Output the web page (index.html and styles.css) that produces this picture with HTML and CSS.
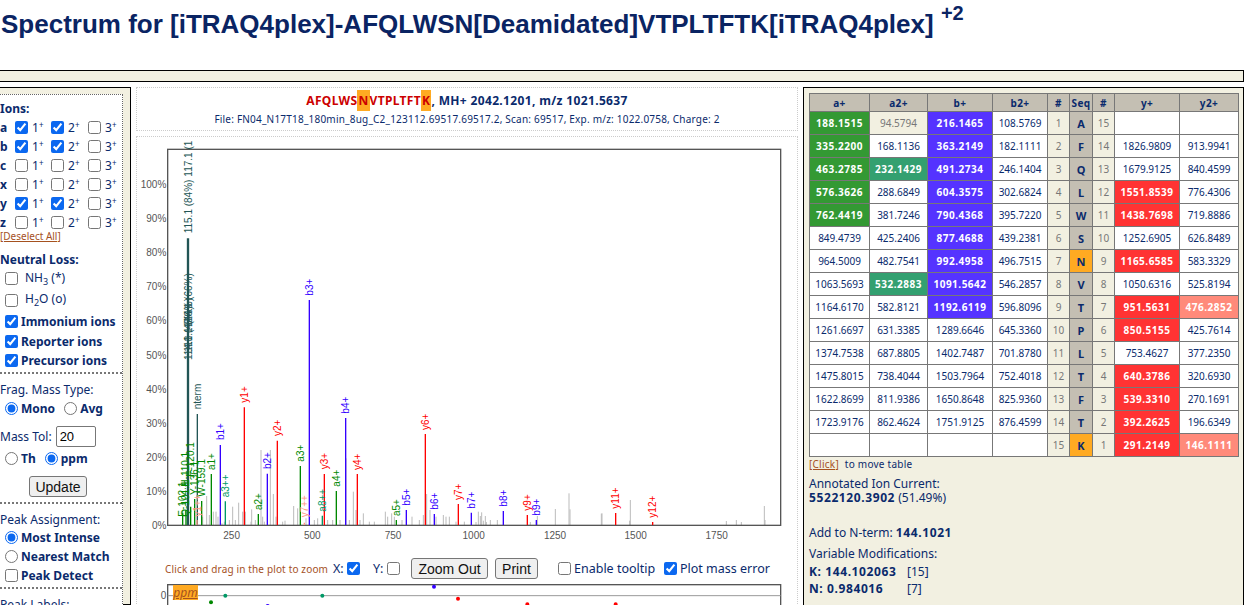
FILE: index.html
```html
<!DOCTYPE html>
<html lang="en">
<head>
<meta charset="utf-8">
<title>Spectrum</title>
<link rel="stylesheet" href="styles.css">
</head>
<body>
<h1 class="title">Spectrum for [iTRAQ4plex]-AFQLWSN[Deamidated]VTPLTFTK[iTRAQ4plex] <sup>+2</sup></h1>
<div class="bar"></div>
<div class="main">
  <aside class="left">
    <div class="inner">
      <section class="sec sec-ions">
        <div class="row h19"><b>Ions:</b></div>
        <div class="ion"><b>a</b><input type="checkbox" checked><span>1<sup>+</sup></span><input type="checkbox" checked><span>2<sup>+</sup></span><input type="checkbox"><span>3<sup>+</sup></span></div>
        <div class="ion"><b>b</b><input type="checkbox" checked><span>1<sup>+</sup></span><input type="checkbox" checked><span>2<sup>+</sup></span><input type="checkbox"><span>3<sup>+</sup></span></div>
        <div class="ion"><b>c</b><input type="checkbox"><span>1<sup>+</sup></span><input type="checkbox"><span>2<sup>+</sup></span><input type="checkbox"><span>3<sup>+</sup></span></div>
        <div class="ion"><b>x</b><input type="checkbox"><span>1<sup>+</sup></span><input type="checkbox"><span>2<sup>+</sup></span><input type="checkbox"><span>3<sup>+</sup></span></div>
        <div class="ion"><b>y</b><input type="checkbox" checked><span>1<sup>+</sup></span><input type="checkbox" checked><span>2<sup>+</sup></span><input type="checkbox"><span>3<sup>+</sup></span></div>
        <div class="ion"><b>z</b><input type="checkbox"><span>1<sup>+</sup></span><input type="checkbox"><span>2<sup>+</sup></span><input type="checkbox"><span>3<sup>+</sup></span></div>
        <div class="deselect"><a href="#">[Deselect All]</a></div>
        <div class="row h18 neutral"><b>Neutral Loss:</b></div>
        <div class="row h21 ind"><input type="checkbox"><span class="gap6">NH<sub>3</sub> (*)</span></div>
        <div class="row h22 ind"><input type="checkbox"><span class="gap6">H<sub>2</sub>O (o)</span></div>
        <div class="row h21 ind"><input type="checkbox" checked><b>Immonium ions</b></div>
        <div class="row h19 ind"><input type="checkbox" checked><b>Reporter ions</b></div>
        <div class="row h19 ind"><input type="checkbox" checked><b>Precursor ions</b></div>
      </section>
      <section class="sec sec-frag">
        <div class="row h18">Frag. Mass Type:</div>
        <div class="row h20 ind"><input type="radio" name="mt" checked><b class="pr">Mono</b><input type="radio" name="mt"><b>Avg</b></div>
        <div class="row h20 tol">Mass Tol: <input type="text" value="20"></div>
        <div class="row h20 ind"><input type="radio" name="tu"><b class="pr">Th</b><input type="radio" name="tu" checked><b>ppm</b></div>
        <button class="btn update" type="button">Update</button>
      </section>
      <section class="sec sec-peak">
        <div class="row h18">Peak Assignment:</div>
        <div class="row h19 ind"><input type="radio" name="pa" checked><b>Most Intense</b></div>
        <div class="row h19 ind"><input type="radio" name="pa"><b>Nearest Match</b></div>
        <div class="row h19 ind"><input type="checkbox"><b>Peak Detect</b></div>
      </section>
      <section class="sec sec-labels">
        <div class="row h18">Peak Labels:</div>
      </section>
    </div>
  </aside>

  <main class="center">
    <header class="head">
      <div class="seqline"><span class="seq">AFQLWS<span class="mod">N</span>VTPLTFT<span class="mod">K</span></span>, MH+ 2042.1201, m/z 1021.5637</div>
      <div class="fileline">File: FN04_N17T18_180min_8ug_C2_123112.69517.69517.2, Scan: 69517, Exp. m/z: 1022.0758, Charge: 2</div>
    </header>
    <div class="plotbox">
      <svg class="plot" viewBox="3 -549 1980 1257" width="660" height="419" aria-label="Spectrum plot">
        <path class="noise" d="M200 615V590M212 615V528M220 615V585M232 615V575M240 615V575M246 615V590M258 615V610M265 615V605M280 615V600M290 615V560M298 615V600M308 615V548M320 615V575M328 615V575M345 615V605M347 615V568M358 615V600M375 615V390M380 615V590M385 615V605M403 615V390M412 615V522M420 615V590M440 615V605M447 615V602M473 615V558M485 615V565M510 615V595M535 615V600M545 615V595M575 615V600M590 615V600M612 615V600M630 615V415M640 615V600M652 615V515M660 615V570M672 615V600M682 615V580M700 615V605M715 615V605M748 615V575M755 615V590M767 615V580M775 615V590M798 615V600M828 615V590M850 615V600M862 615V585M872 615V522M882 615V570M900 615V590M922 615V585M930 615V590M940 615V590M960 615V605M985 615V605M1020 615V606M1027 615V575M1033 615V588M1037 615V577M1042 615V602M1048 615V588M1051 615V606M1063 615V600M1084 615V600M1183 615V606M1204 615V588M1258 615V567M1299 615V520M1302 615V568M1396 615V581M1398 615V580M1481 615V602M1483 615V540M1771 615V603M1801 615V600M1816 615V606M1885 615V558M1887 615V600"/>
        <rect class="frame" x="95" y="-512" width="1839" height="1128"/>

        <g class="ylab">
          <text x="91" y="-395">100%</text><text x="91" y="-293">90%</text><text x="91" y="-191">80%</text><text x="91" y="-89">70%</text><text x="91" y="13">60%</text><text x="91" y="118">50%</text><text x="91" y="218">40%</text><text x="91" y="320">30%</text><text x="91" y="422">20%</text><text x="91" y="524">10%</text><text x="91" y="627">0%</text>
        </g>
        <g class="xlab">
          <text x="287" y="657">250</text><text x="529" y="657">500</text><text x="771" y="657">750</text><text x="1013" y="657">1000</text><text x="1257" y="657">1250</text><text x="1499" y="657">1500</text><text x="1742" y="657">1750</text>
        </g>

        <path class="pk c-term thick" d="M156 615V-245"/>
        <path class="pk c-term" d="M184 615V282"/>
        <path class="pk c-a" d="M140 615V580M150 615V570M164 615V560M176 615V537M197 615V543M226 615V462M367 615V582M493 615V438M601 615V513M781 615V600"/>
        <path class="pk c-a2" d="M268 615V544M559 615V587"/>
        <path class="pk c-b" d="M253 615V375M394 615V461M520 615V-60M629 615V294M811 615V570M895 615V582M1006 615V578M1102 615V573M1201 615V600"/>
        <path class="pk c-y" d="M325 615V262M424 615V362M565 615V462M664 615V462M868 615V342M967 615V552M1174 615V585M1439 615V579M1550 615V606"/>
        <path class="pk c-y2" d="M505 615V608M183 615V600"/>

        <g class="lab c-term-t">
          <text transform="translate(167 -260) rotate(-90)">115.1 (84%)</text>
          <text transform="translate(167 -430) rotate(-90)">117.1 (1</text>
          <text transform="translate(167 21) rotate(-90)">116.1 (66%)</text>
          <text transform="translate(167 120) rotate(-90)">114.1 (47%)</text>
          <text transform="translate(167 95) rotate(-90)">118.1 (44%)</text>
          <text transform="translate(196 268) rotate(-90)">nterm</text>
        </g>
        <g class="lab c-a-t">
          <text transform="translate(150 590) rotate(-90)">E-102.1</text>
          <text transform="translate(160 590) rotate(-90)">Q-101.1</text>
          <text transform="translate(160 500) rotate(-90)">H-110.1</text>
          <text transform="translate(175 470) rotate(-90)">F-120.1</text>
          <text transform="translate(185 525) rotate(-90)">Y-136.1</text>
          <text transform="translate(208 530) rotate(-90)">W-159.1</text>
          <text transform="translate(238 450) rotate(-90)">a1+</text>
          <text transform="translate(378 570) rotate(-90)">a2+</text>
          <text transform="translate(504 425) rotate(-90)">a3+</text>
          <text transform="translate(612 500) rotate(-90)">a4+</text>
          <text transform="translate(792 588) rotate(-90)">a5+</text>
        </g>
        <g class="lab c-a2-t">
          <text transform="translate(279 532) rotate(-90)">a3++</text>
          <text transform="translate(570 575) rotate(-90)">a8++</text>
        </g>
        <g class="lab c-b-t">
          <text transform="translate(264 360) rotate(-90)">b1+</text>
          <text transform="translate(405 447) rotate(-90)">b2+</text>
          <text transform="translate(531 -73) rotate(-90)">b3+</text>
          <text transform="translate(640 281) rotate(-90)">b4+</text>
          <text transform="translate(822 557) rotate(-90)">b5+</text>
          <text transform="translate(906 569) rotate(-90)">b6+</text>
          <text transform="translate(1017 566) rotate(-90)">b7+</text>
          <text transform="translate(1113 560) rotate(-90)">b8+</text>
          <text transform="translate(1212 587) rotate(-90)">b9+</text>
        </g>
        <g class="lab c-y-t">
          <text transform="translate(336 248) rotate(-90)">y1+</text>
          <text transform="translate(435 348) rotate(-90)">y2+</text>
          <text transform="translate(576 448) rotate(-90)">y3+</text>
          <text transform="translate(675 450) rotate(-90)">y4+</text>
          <text transform="translate(879 330) rotate(-90)">y6+</text>
          <text transform="translate(978 540) rotate(-90)">y7+</text>
          <text transform="translate(1185 572) rotate(-90)">y9+</text>
          <text transform="translate(1450 566) rotate(-90)">y11+</text>
          <text transform="translate(1561 593) rotate(-90)">y12+</text>
        </g>
        <g class="lab c-y2-t">
          <text transform="translate(516 592) rotate(-90)">y7++</text>
          <text transform="translate(194 590) rotate(-90)">y1++</text>
        </g>
      </svg>

      <div class="controls">
        <span class="hint">Click and drag in the plot to zoom</span>
        <label class="ctl axis-x">X: <input type="checkbox" checked></label>
        <label class="ctl axis-y">Y: <input type="checkbox"></label>
        <button class="btn zoom" type="button">Zoom Out</button>
        <button class="btn print" type="button">Print</button>
        <label class="ctl tip"><input type="checkbox">Enable tooltip</label>
        <label class="ctl err"><input type="checkbox" checked>Plot mass error</label>
      </div>

      <div class="errbox">
        <a class="ppm" href="#">ppm</a>
        <svg class="errplot" viewBox="3 783 1980 90" width="660" height="30" aria-label="Mass error plot">
          <rect class="frame" x="95" y="794" width="1839" height="200"/>
          <path class="zero" d="M95 827H1934"/>
          <text class="ylab" x="91" y="837">0</text>
          <circle class="d-a" cx="225" cy="847" r="6"/>
          <circle class="d-a2" cx="268" cy="827" r="6"/>
          <circle class="d-a2" cx="559" cy="827" r="6"/>
          <circle class="d-b" cx="894" cy="800" r="6"/>
          <circle class="d-b" cx="395" cy="858" r="6"/>
          <circle class="d-y" cx="966" cy="836" r="6"/>
          <circle class="d-y" cx="1174" cy="853" r="6"/>
          <circle class="d-y" cx="1439" cy="853" r="6"/>
        </svg>
      </div>
    </div>
  </main>

  <aside class="right">
    <table class="ions">
      <colgroup><col class="w60"><col class="w58"><col class="w65"><col class="w55"><col class="w22"><col class="w23"><col class="w22"><col class="w65"><col class="w59"></colgroup>
      <thead><tr><th>a+</th><th>a2+</th><th>b+</th><th>b2+</th><th>#</th><th>Seq</th><th>#</th><th>y+</th><th>y2+</th></tr></thead>
      <tbody>
        <tr><td class="a">188.1515</td><td class="un">94.5794</td><td class="b">216.1465</td><td>108.5769</td><td class="n">1</td><td class="s">A</td><td class="n">15</td><td></td><td></td></tr>
        <tr><td class="a">335.2200</td><td>168.1136</td><td class="b">363.2149</td><td>182.1111</td><td class="n">2</td><td class="s">F</td><td class="n">14</td><td>1826.9809</td><td>913.9941</td></tr>
        <tr><td class="a">463.2785</td><td class="a2">232.1429</td><td class="b">491.2734</td><td>246.1404</td><td class="n">3</td><td class="s">Q</td><td class="n">13</td><td>1679.9125</td><td>840.4599</td></tr>
        <tr><td class="a">576.3626</td><td>288.6849</td><td class="b">604.3575</td><td>302.6824</td><td class="n">4</td><td class="s">L</td><td class="n">12</td><td class="y">1551.8539</td><td>776.4306</td></tr>
        <tr><td class="a">762.4419</td><td>381.7246</td><td class="b">790.4368</td><td>395.7220</td><td class="n">5</td><td class="s">W</td><td class="n">11</td><td class="y">1438.7698</td><td>719.8886</td></tr>
        <tr><td>849.4739</td><td>425.2406</td><td class="b">877.4688</td><td>439.2381</td><td class="n">6</td><td class="s">S</td><td class="n">10</td><td>1252.6905</td><td>626.8489</td></tr>
        <tr><td>964.5009</td><td>482.7541</td><td class="b">992.4958</td><td>496.7515</td><td class="n">7</td><td class="s m">N</td><td class="n">9</td><td class="y">1165.6585</td><td>583.3329</td></tr>
        <tr><td>1063.5693</td><td class="a2">532.2883</td><td class="b">1091.5642</td><td>546.2857</td><td class="n">8</td><td class="s">V</td><td class="n">8</td><td>1050.6316</td><td>525.8194</td></tr>
        <tr><td>1164.6170</td><td>582.8121</td><td class="b">1192.6119</td><td>596.8096</td><td class="n">9</td><td class="s">T</td><td class="n">7</td><td class="y">951.5631</td><td class="y2">476.2852</td></tr>
        <tr><td>1261.6697</td><td>631.3385</td><td>1289.6646</td><td>645.3360</td><td class="n">10</td><td class="s">P</td><td class="n">6</td><td class="y">850.5155</td><td>425.7614</td></tr>
        <tr><td>1374.7538</td><td>687.8805</td><td>1402.7487</td><td>701.8780</td><td class="n">11</td><td class="s">L</td><td class="n">5</td><td>753.4627</td><td>377.2350</td></tr>
        <tr><td>1475.8015</td><td>738.4044</td><td>1503.7964</td><td>752.4018</td><td class="n">12</td><td class="s">T</td><td class="n">4</td><td class="y">640.3786</td><td>320.6930</td></tr>
        <tr><td>1622.8699</td><td>811.9386</td><td>1650.8648</td><td>825.9360</td><td class="n">13</td><td class="s">F</td><td class="n">3</td><td class="y">539.3310</td><td>270.1691</td></tr>
        <tr><td>1723.9176</td><td>862.4624</td><td>1751.9125</td><td>876.4599</td><td class="n">14</td><td class="s">T</td><td class="n">2</td><td class="y">392.2625</td><td>196.6349</td></tr>
        <tr><td></td><td></td><td></td><td></td><td class="n">15</td><td class="s m">K</td><td class="n">1</td><td class="y">291.2149</td><td class="y2">146.1111</td></tr>
      </tbody>
    </table>
    <div class="move"><a href="#">[Click]</a> to move table</div>
    <div class="info current">Annotated Ion Current:</div>
    <div class="info"><b>5522120.3902</b> (51.49%)</div>
    <div class="info nterm">Add to N-term: <b>144.1021</b></div>
    <div class="info varhead">Variable Modifications:</div>
    <div class="info var"><b class="vk">K: 144.102063</b><span>[15]</span></div>
    <div class="info var"><b class="vk">N: 0.984016</b><span>[7]</span></div>
  </aside>
</div>
</body>
</html>
```
FILE: styles.css
```css
* { box-sizing: border-box; }
html, body { margin: 0; padding: 0; height: 605px; overflow: hidden; background: #fff; }
body { font-family: "Noto Sans", "DejaVu Sans", sans-serif; font-size: 12px; color: #0a2a6c; }

.title { margin: 0; height: 70px; padding: 9px 0 0 1px; font: bold 26px/30px "Liberation Sans", Arial, sans-serif; color: #0a2463; white-space: nowrap; }
.title sup { font-size: 20px; font-weight: 700; line-height: 0; vertical-align: 13px; }
.bar { height: 12px; width: 1246px; margin-left: -2px; background: #f2f0e1; border: 1.5px solid #000; }

.main { display: flex; gap: 5px; margin-top: 5px; height: 518px; }

/* left */
.left { flex: none; width: 131px; height: 518px; background: #f2f0e1; border: 1.5px solid #000; border-left: 0; padding: 6px 7px 0 0; }
.inner { background: #fff; border: 1px dotted #666; border-left: 0; height: 520px; }
.sec { border-bottom: 2px dotted #777; }
.sec-ions { padding-top: 4px; height: 279px; }
.sec-frag { padding-top: 6px; height: 130px; }
.sec-peak { padding-top: 6px; height: 85px; }
.sec-labels { padding-top: 6px; border-bottom: 0; }
.row { display: flex; align-items: center; white-space: nowrap; }
.h18 { height: 18px; } .h19 { height: 19px; } .h20 { height: 20px; } .h21 { height: 21px; } .h22 { height: 22px; }
.ind { padding-left: 5px; }
input[type=checkbox], input[type=radio] { width: 13px; height: 13px; margin: 0; accent-color: #0b68f0; flex: none; }
.ion { display: grid; grid-template-columns: 15px 17px 19px 17px 20px 17px 18px; align-items: center; height: 19px; }
.ion sup { font-size: 8px; line-height: 0; vertical-align: 4px; }
.deselect { height: 10px; line-height: 9px; font-size: 10px; margin-bottom: 8px; }
.deselect a, .move a { color: #a5511f; }
.neutral { margin-top: 8px; }
.gap6 { margin-left: 7px; }
.ind b { margin-left: 3px; }
.ind b.pr { margin-right: 9px; }
.row sub { font-size: 9px; }
.tol { margin: 8px 0 2px; }
.tol input { width: 40px; height: 21px; margin-left: 4px; padding: 0 3px; font: 13px "Liberation Sans", Arial, sans-serif; border: 1px solid #777; border-radius: 2px; }
.btn { font: 14px/1 "Liberation Sans", Arial, sans-serif; color: #111; background: #efefef; border: 1px solid #767676; border-radius: 3px; padding: 0; }
.update { display: block; width: 58px; height: 21px; margin: 8px 0 0 29px; }

/* centre */
.center { flex: none; width: 662px; height: 518px; }
.head { height: 44px; border: 1px dotted #ccc; text-align: center; }
.seqline { height: 24px; padding-top: 3px; line-height: 20px; font-weight: 700; font-size: 12px; letter-spacing: .35px; }
.seq { color: #cc0000; }
.mod { background: #ffaa22; color: #cc0000; padding: 2px 1px; }
.fileline { font-size: 10px; line-height: 14px; letter-spacing: .21px; }
.plotbox { margin-top: 5px; border: 1px dotted #ccc; height: 470px; }
.plot { display: block; }
.errplot { display: block; }
.noise { stroke: #bbb; stroke-width: 3; fill: none; }
.frame { fill: none; stroke: #555; stroke-width: 4; }
.pk { fill: none; stroke-width: 4; }
.thick { stroke-width: 7; }
.c-term { stroke: #225555; } .c-a { stroke: #008800; } .c-a2 { stroke: #009966; } .c-b { stroke: #3300ff; } .c-y { stroke: #ff0000; } .c-y2 { stroke: #ff9988; }
.lab text { font: 30px "Liberation Sans", Arial, sans-serif; }
.c-term-t { fill: #225555; } .c-a-t { fill: #008800; } .c-a2-t { fill: #009966; } .c-b-t { fill: #3300ff; } .c-y-t { fill: #ff0000; } .c-y2-t { fill: #ff9988; }
.ylab, .ylab text { font: 30px "Liberation Sans", Arial, sans-serif; fill: #555; text-anchor: end; }
.xlab text { font: 30px "Liberation Sans", Arial, sans-serif; fill: #555; text-anchor: middle; }
.controls { display: flex; align-items: center; height: 25px; padding-left: 28px; white-space: nowrap; font-size: 12.5px; }
.hint { color: #a5511f; font-size: 10px; width: 168px; letter-spacing: .15px; }
.ctl { display: inline-flex; align-items: center; gap: 3px; }
.axis-x { width: 40px; } .axis-y { width: 38px; gap: 4px; }
.zoom { width: 77px; height: 21px; }
.print { width: 43px; height: 21px; margin-left: 7px; }
.tip { margin-left: 20px; width: 106px; }
.errbox { position: relative; height: 30px; }
.zero { stroke: #999; stroke-width: 3; fill: none; }
.d-a { fill: #008800; } .d-a2 { fill: #009966; } .d-b { fill: #3300ff; } .d-y { fill: #ff0000; }
.ppm { position: absolute; left: 36px; top: 4px; width: 25px; height: 15px; line-height: 15px; text-align: center; background: #ffaa22; color: #a5511f; font-style: italic; font-size: 12px; }

/* right */
.right { flex: none; width: 441px; height: 530px; background: #f2f0e1; border: 1.5px solid #000; padding: 5px 5px 0 5px; }
.ions { border-collapse: collapse; table-layout: fixed; width: 429px; font-size: 10px; text-align: center; }
.w60 { width: 60px; } .w58 { width: 58px; } .w65 { width: 65px; } .w55 { width: 55px; } .w22 { width: 22px; } .w23 { width: 23px; } .w59 { width: 59px; }
.ions th, .ions td { border: 1px solid #777; padding: 0; overflow: hidden; white-space: nowrap; }
.ions th { height: 18px; background: #c4bfb3; font-weight: 700; letter-spacing: .4px; }
.ions td { height: 23px; background: #fff; }
.ions td.a, .ions td.a2, .ions td.b, .ions td.y, .ions td.y2 { color: #fff; font-weight: 700; letter-spacing: .5px; }
.ions td.a { background: #339933; }
.ions td.a2 { background: #33a070; }
.ions td.b { background: #5533ff; }
.ions td.y { background: #ff3333; }
.ions td.y2 { background: #ff8a7a; }
.ions td.un { background: #f2f0e1; color: #777; }
.ions td.n { background: #f2f0e1; color: #777; }
.ions td.s { background: #c4bfb3; font-weight: 700; font-size: 11px; }
.ions td.m { background: #ffaa22; }
.move { font-size: 10px; height: 14px; line-height: 14px; letter-spacing: .25px; }
.move a { margin-right: 3px; }
.info { font-size: 12px; line-height: 14px; }
.info b { letter-spacing: .6px; }
.current { margin-top: 6px; }
.nterm { margin-top: 21px; }
.varhead { margin-top: 7px; }
.var { display: flex; margin-top: 4px; }
.var + .var { margin-top: 3px; }
.vk { width: 98px; }
```
